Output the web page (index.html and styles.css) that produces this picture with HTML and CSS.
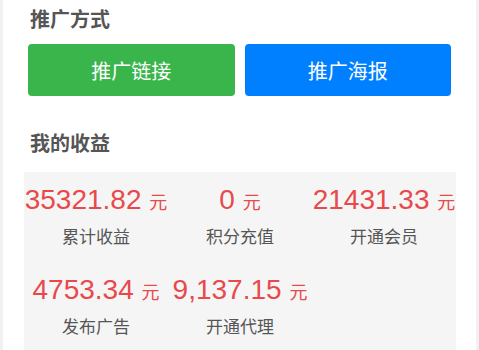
FILE: index.html
```html
<!DOCTYPE html>
<html lang="zh">
<head>
<meta charset="utf-8">
<link rel="stylesheet" href="styles.css">
</head>
<body>
<div class="card">
  <h2 class="title">推广方式</h2>
  <div class="btns">
    <a class="btn green">推广链接</a>
    <a class="btn blue">推广海报</a>
  </div>
  <h2 class="title title2">我的收益</h2>
  <div class="stats">
    <div class="cell"><div class="num">35321.82 <span class="unit">元</span></div><div class="label">累计收益</div></div>
    <div class="cell"><div class="num">0 <span class="unit">元</span></div><div class="label">积分充值</div></div>
    <div class="cell"><div class="num">21431.33 <span class="unit">元</span></div><div class="label">开通会员</div></div>
    <div class="cell"><div class="num">4753.34 <span class="unit">元</span></div><div class="label">发布广告</div></div>
    <div class="cell"><div class="num">9,137.15 <span class="unit">元</span></div><div class="label">开通代理</div></div>
  </div>
</div>
</body>
</html>
```
FILE: styles.css
```css
html, body {
  margin: 0;
  padding: 0;
  background: #f1f1f1;
  font-family: "Liberation Sans", "Noto Sans CJK SC", sans-serif;
}
.card {
  margin: 0 3px;
  background: #fff;
  padding: 6px 25px 0 25px;
  height: 344px;
  overflow: hidden;
}
.title {
  margin: 0;
  padding-left: 2px;
  font-size: 20px;
  line-height: 28px;
  font-weight: bold;
  color: #555;
}
.title2 {
  margin-top: 34px;
}
.btns {
  display: flex;
  gap: 10px;
  margin-top: 10px;
}
.btn {
  flex: 1;
  height: 52px;
  border-radius: 4px;
  color: #fff;
  font-size: 20px;
  display: flex;
  align-items: center;
  justify-content: center;
}
.green { background: #3ab54b; }
.blue { background: #0080ff; }
.stats {
  margin: 14px -5px 0 -4px;
  background: #f5f5f5;
  padding-top: 8px;
  display: grid;
  grid-template-columns: repeat(3, 1fr);
  row-gap: 20px;
  padding-bottom: 20px;
}
.cell {
  text-align: center;
  white-space: nowrap;
}
.num {
  font-size: 28px;
  line-height: 40px;
  color: #e84a4c;
}
.unit {
  font-size: 18px;
}
.label {
  margin-top: 3px;
  font-size: 17px;
  line-height: 24px;
  color: #555;
}
```
